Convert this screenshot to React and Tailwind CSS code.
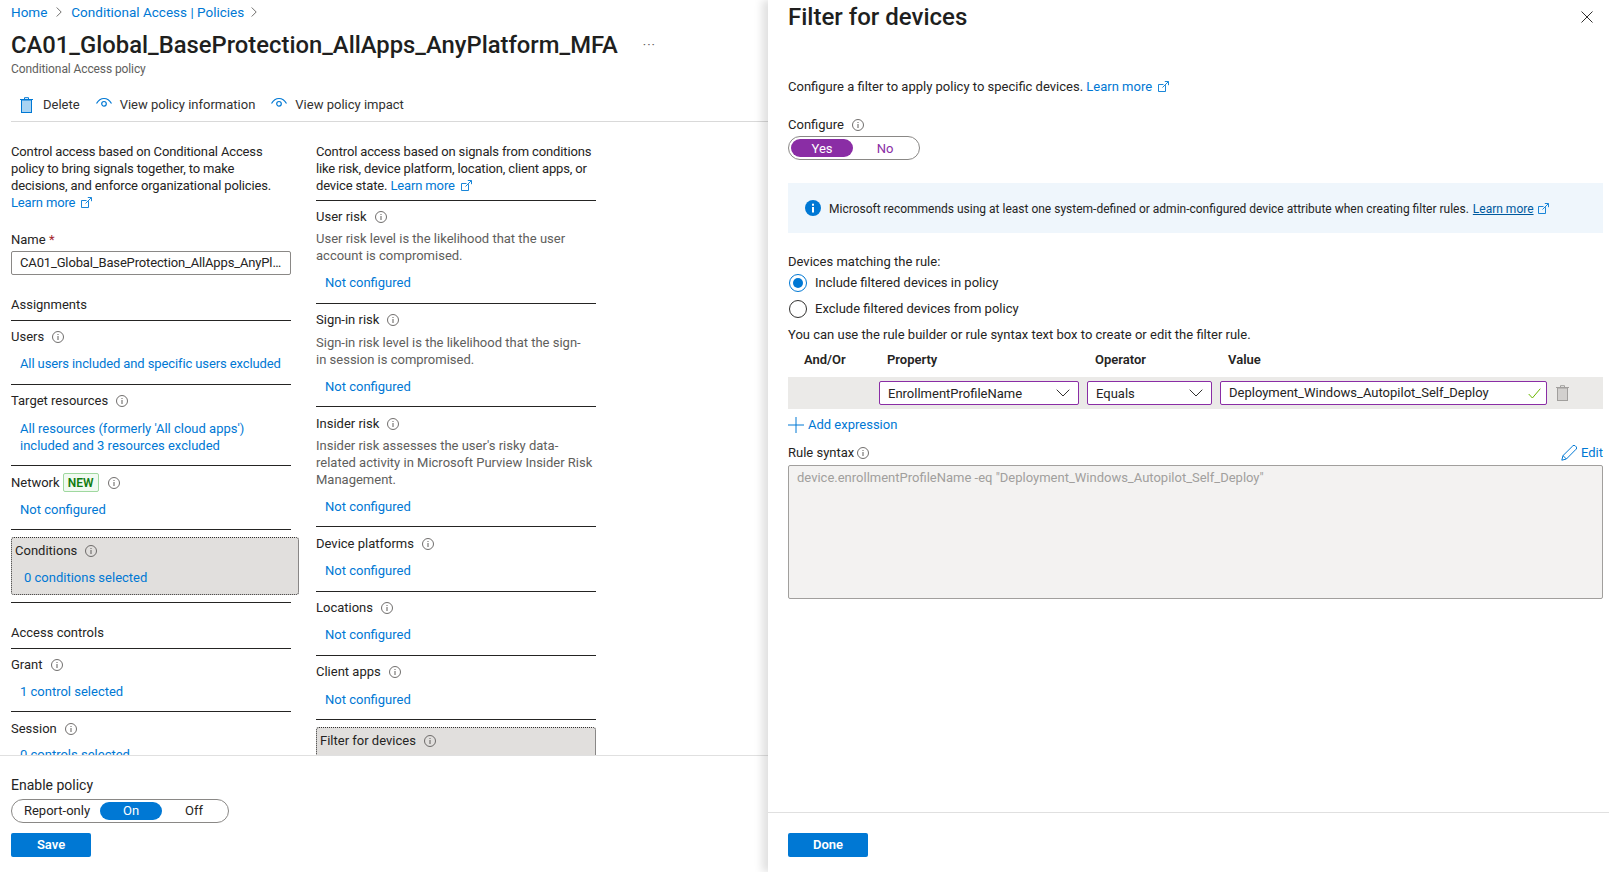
import React from "react";

const Info = ({ className = "ml-[8px]" }) => (
  <svg width="12" height="12" viewBox="0 0 12 12" className={`shrink-0 ${className}`} fill="none">
    <circle cx="6" cy="6" r="5.5" stroke="#605e5c" strokeWidth="0.9" />
    <rect x="5.5" y="5" width="1" height="4" fill="#605e5c" />
    <rect x="5.5" y="3" width="1" height="1" fill="#605e5c" />
  </svg>
);

const Ext = ({ className = "ml-[6px]", color = "#0078d4" }) => (
  <svg width="11" height="11" viewBox="0 0 11 11" className={`inline-block align-[-1px] ${className}`} fill="none" stroke={color} strokeWidth="0.9">
    <path d="M7.5 4.2V10.5H.5V3.5H5.5" />
    <path d="M4.5 6.5L10.2.8M6.800.5h3.700v3.700" />
  </svg>
);

const Eye = () => (
  <svg width="16" height="16" viewBox="0 0 16 16" fill="none" stroke="#0078d4" className="shrink-0">
    <path d="M.5 6.500C2.500 3 5 1.500 8 1.500s5.500 1.500 7.500 5" strokeWidth="1.2" />
    <circle cx="8" cy="6.800" r="2.300" strokeWidth="1.200" />
  </svg>
);

const Chevron = () => (
  <svg width="6" height="10" viewBox="0 0 6 10" fill="none" stroke="#605e5c" strokeWidth="0.9" className="shrink-0">
    <path d="M.7.5L5.2 5 .7 9.5" />
  </svg>
);

const Down = () => (
  <svg width="14" height="8" viewBox="0 0 14 8" fill="none" stroke="#323130" strokeWidth="1" className="shrink-0">
    <path d="M.7.7L7 7 13.3.7" />
  </svg>
);

const Trash = ({ stroke, fill }) => (
  <svg width="13" height="16" viewBox="0 0 13 16" className="shrink-0">
    <rect x="1.500" y="3" width="10" height="12.500" fill={fill} stroke={stroke} strokeWidth="1" />
    <path d="M0 2.500h13M4.500 2.500V.700h4v1.800" fill="none" stroke={stroke} strokeWidth="1" />
  </svg>
);

const Label = ({ children, mt, info = "ml-[8px]" }) => (
  <div className={`flex items-center h-[17px] leading-[17px] ${mt}`}>
    <span>{children}</span>
    <Info className={info} />
  </div>
);

const Lnk = ({ children, mt, pl = "pl-[9px]", extra = "" }) => (
  <div className={`text-[#0078d4] leading-[17px] whitespace-nowrap ${pl} ${mt} ${extra}`}>{children}</div>
);

const Line = ({ mt }) => <div className={`h-px bg-[#252423] ${mt}`} />;

const Desc = ({ children, mt }) => <div className={`text-[#605e5c] leading-[17px] whitespace-nowrap ${mt}`}>{children}</div>;

export default function App() {
  return (
    <div className="flex w-[1609px] h-[872px] overflow-hidden bg-white text-[#252423] text-[13px] font-['Roboto','Noto_Sans',sans-serif]">
      {/* Left blade */}
      <div className="flex flex-col w-[768px] h-full shrink-0">
        <div className="pl-[11px]">
          <div className="flex items-center h-[24px] text-[#0078d4] text-[13.5px]">
            <span>Home</span>
            <span className="mx-[9px] flex"><Chevron /></span>
            <span>Conditional Access | Policies</span>
            <span className="ml-[7px] flex"><Chevron /></span>
          </div>
          <div className="flex items-center h-[36px] mt-[3px]">
            <h1 className="text-[23.8px] font-medium text-[#201f1e] leading-[36px]">CA01_Global_BaseProtection_AllApps_AnyPlatform_MFA</h1>
            <span className="ml-[25px] text-[#605e5c] text-[13px] tracking-[1px] leading-[18px]">···</span>
          </div>
          <div className="h-[12px] leading-[12px] text-[12px] text-[#605e5c] tracking-[-0.1px]">Conditional Access policy</div>
          <div className="flex items-center h-[33px] mt-[14px] border-b border-[#d9d9d9] text-[#323130]">
            <span className="flex ml-[9px]"><Trash stroke="#0078d4" fill="#a9d3f2" /></span>
            <span className="ml-[10px]">Delete</span>
            <span className="flex ml-[16px]"><Eye /></span>
            <span className="ml-[8px]">View policy information</span>
            <span className="flex ml-[16px]"><Eye /></span>
            <span className="ml-[8px]">View policy impact</span>
          </div>
        </div>

        <div className="flex-1 min-h-0 overflow-hidden flex pl-[11px] pt-[21px]">
          {/* Column 1 */}
          <div className="w-[280px] shrink-0">
            <p className="leading-[17px] whitespace-nowrap tracking-[-0.14px]">
              Control access based on Conditional Access<br />
              policy to bring signals together, to make<br />
              decisions, and enforce organizational policies.<br />
              <span className="text-[#0078d4]">Learn more<Ext /></span>
            </p>
            <div className="mt-[20px] h-[17px] leading-[17px]">Name <span className="text-[#a4262c]">*</span></div>
            <div className="mt-[3px] h-[24px] border border-[#8a8886] rounded-[2px] flex items-center pl-[8px] pr-[4px]">
              <span className="truncate tracking-[-0.15px]">CA01_Global_BaseProtection_AllApps_AnyPlatform_MFA</span>
            </div>
            <div className="mt-[21px] leading-[17px]">Assignments</div>
            <Line mt="mt-[7px]" />
            <Label mt="mt-[7px]">Users</Label>
            <Lnk mt="mt-[10px]" extra="tracking-[-0.11px]">All users included and specific users excluded</Lnk>
            <Line mt="mt-[12px]" />
            <Label mt="mt-[7px]">Target resources</Label>
            <Lnk mt="mt-[11px]">All resources (formerly 'All cloud apps')<br />included and 3 resources excluded</Lnk>
            <Line mt="mt-[11px]" />
            <div className="flex items-center h-[17px] mt-[8px]">
              <span>Network</span>
              <span className="ml-[3px] flex items-center justify-center w-[36px] h-[19px] border border-[#9fd89f] bg-[#f1faf1] rounded-[2px] text-[#107c10] font-semibold text-[12px]">NEW</span>
              <Info className="ml-[9px]" />
            </div>
            <Lnk mt="mt-[10px]">Not configured</Lnk>
            <Line mt="mt-[11px]" />
            <div className="mt-[7px] w-[288px] h-[58px] bg-[#e1dfdd] border border-dotted border-[#323130] rounded-[3px] pl-[3px]">
              <Label mt="mt-[4px]">Conditions</Label>
              <Lnk mt="mt-[10px]">0 conditions selected</Lnk>
            </div>
            <Line mt="mt-[7px]" />
            <div className="mt-[21px] leading-[17px]">Access controls</div>
            <Line mt="mt-[7px]" />
            <Label mt="mt-[7px]">Grant</Label>
            <Lnk mt="mt-[10px]">1 control selected</Lnk>
            <Line mt="mt-[11px]" />
            <Label mt="mt-[8px]">Session</Label>
            <Lnk mt="mt-[9px]">0 controls selected</Lnk>
          </div>

          {/* Column 2 */}
          <div className="w-[280px] shrink-0 ml-[25px]">
            <p className="leading-[17px] whitespace-nowrap tracking-[-0.14px]">
              Control access based on signals from conditions<br />
              like risk, device platform, location, client apps, or<br />
              device state. <span className="text-[#0078d4]">Learn more<Ext /></span>
            </p>
            <Line mt="mt-[6px]" />
            <Label mt="mt-[7px]">User risk</Label>
            <Desc mt="mt-[5px]">User risk level is the likelihood that the user<br />account is compromised.</Desc>
            <Lnk mt="mt-[10px]">Not configured</Lnk>
            <Line mt="mt-[12px]" />
            <Label mt="mt-[7px]">Sign-in risk</Label>
            <Desc mt="mt-[6px]">Sign-in risk level is the likelihood that the sign-<br />in session is compromised.</Desc>
            <Lnk mt="mt-[10px]">Not configured</Lnk>
            <Line mt="mt-[11px]" />
            <Label mt="mt-[8px]">Insider risk</Label>
            <Desc mt="mt-[5px]">Insider risk assesses the user's risky data-<br />related activity in Microsoft Purview Insider Risk<br />Management.</Desc>
            <Lnk mt="mt-[10px]">Not configured</Lnk>
            <Line mt="mt-[11px]" />
            <Label mt="mt-[8px]">Device platforms</Label>
            <Lnk mt="mt-[10px]">Not configured</Lnk>
            <Line mt="mt-[12px]" />
            <Label mt="mt-[7px]">Locations</Label>
            <Lnk mt="mt-[10px]">Not configured</Lnk>
            <Line mt="mt-[12px]" />
            <Label mt="mt-[7px]">Client apps</Label>
            <Lnk mt="mt-[11px]">Not configured</Lnk>
            <Line mt="mt-[11px]" />
            <div className="mt-[7px] h-[60px] bg-[#e1dfdd] border border-dotted border-[#323130] rounded-[3px] pl-[3px]">
              <Label mt="mt-[4px]">Filter for devices</Label>
            </div>
          </div>
        </div>

        <div className="h-[117px] shrink-0 border-t border-[#e0e0e0] pl-[11px] pt-[21px]">
          <div className="leading-[17px] text-[14px]">Enable policy</div>
          <div className="mt-[5px] w-[218px] h-[24px] border border-[#8a8886] rounded-full p-[2px] flex items-center">
            <span className="w-[86px] text-center">Report-only</span>
            <span className="w-[62px] h-[18px] rounded-full bg-[#0078d4] text-white flex items-center justify-center">On</span>
            <span className="flex-1 text-center">Off</span>
          </div>
          <div className="mt-[10px] w-[80px] h-[24px] bg-[#0078d4] rounded-[2px] text-white font-semibold flex items-center justify-center">Save</div>
        </div>
      </div>

      {/* Right panel */}
      <div className="relative z-10 flex flex-col flex-1 h-full shadow-[-6px_0_8px_rgba(0,0,0,0.12)] bg-white">
        <div className="flex-1 min-h-0 pl-[20px] pr-[6px]">
          <div className="flex items-center justify-between h-[34px] pr-[10px]">
            <h2 className="text-[24px] font-medium text-[#201f1e] leading-[34px]">Filter for devices</h2>
            <svg width="12" height="12" viewBox="0 0 12 12" stroke="#323130" strokeWidth="1" fill="none"><path d="M.5.5l11 11M11.5.5l-11 11" /></svg>
          </div>
          <div className="mt-[44px] leading-[17px]">
            Configure a filter to apply policy to specific devices. <span className="text-[#0078d4]">Learn more<Ext /></span>
          </div>
          <Label mt="mt-[21px]">Configure</Label>
          <div className="mt-[3px] w-[132px] h-[24px] border border-[#8a8886] rounded-full p-[2px] flex items-center">
            <span className="w-[62px] h-[18px] pt-px rounded-full bg-[#8a2da5] text-white flex items-center justify-center">Yes</span>
            <span className="flex-1 text-center text-[#8a2da5] pt-px">No</span>
          </div>
          <div className="mt-[23px] h-[50px] bg-[#eff6fc] flex items-center pl-[17px] text-[12px]">
            <svg width="16" height="16" viewBox="0 0 16 16" className="shrink-0">
              <circle cx="8" cy="8" r="8" fill="#0078d4" />
              <rect x="7" y="7" width="2" height="5.500" fill="#fff" />
              <rect x="7" y="3.700" width="2" height="2" fill="#fff" />
            </svg>
            <span className="ml-[8px] pt-px">Microsoft recommends using at least one system-defined or admin-configured device attribute when creating filter rules.</span>
            <span className="ml-[4px] pt-px text-[#005a9e] underline">Learn more</span>
            <Ext className="ml-[4px]" />
          </div>
          <div className="mt-[20px] leading-[17px]">Devices matching the rule:</div>
          <div className="mt-[4px] h-[18px] flex items-center pl-px">
            <span className="w-[18px] h-[18px] rounded-full border border-[#0078d4] flex items-center justify-center shrink-0">
              <span className="w-[10px] h-[10px] rounded-full bg-[#0078d4]" />
            </span>
            <span className="ml-[8px]">Include filtered devices in policy</span>
          </div>
          <div className="mt-[8px] h-[18px] flex items-center pl-px">
            <span className="w-[18px] h-[18px] rounded-full border border-[#323130] shrink-0" />
            <span className="ml-[8px]">Exclude filtered devices from policy</span>
          </div>
          <div className="mt-[8px] leading-[17px]">You can use the rule builder or rule syntax text box to create or edit the filter rule.</div>
          <div className="mt-[8px] flex h-[17px] items-center font-semibold pl-[16px]">
            <span className="w-[83px]">And/Or</span>
            <span className="w-[208px]">Property</span>
            <span className="w-[133px]">Operator</span>
            <span>Value</span>
          </div>
          <div className="mt-[9px] h-[32px] bg-[#ebeae8] flex items-center pl-[91px]">
            <div className="w-[200px] h-[24px] bg-white border border-[#8a2da5] rounded-[2px] flex items-center justify-between pl-[8px] pr-[8px]">
              <span className="pt-[2px]">EnrollmentProfileName</span><Down />
            </div>
            <div className="ml-[8px] w-[125px] h-[24px] bg-white border border-[#8a2da5] rounded-[2px] flex items-center justify-between pl-[8px] pr-[8px]">
              <span className="pt-[2px]">Equals</span><Down />
            </div>
            <div className="ml-[8px] w-[327px] h-[24px] bg-white border border-[#8a2da5] rounded-[2px] flex items-center justify-between pl-[8px] pr-[5px]">
              <span>Deployment_Windows_Autopilot_Self_Deploy</span>
              <svg width="13" height="11" viewBox="0 0 13 11" fill="none" stroke="#6bb700" strokeWidth="1"><path d="M.7 6l3.700 4L12.300.7" /></svg>
            </div>
            <span className="flex ml-[9px]"><Trash stroke="#a19f9d" fill="#d2d0ce" /></span>
          </div>
          <div className="mt-[7px] h-[17px] flex items-center text-[#0078d4]">
            <svg width="16" height="16" viewBox="0 0 16 16" stroke="#0078d4" strokeWidth="1" fill="none" className="shrink-0"><path d="M8 0v16M0 8h16" /></svg>
            <span className="ml-[4px]">Add expression</span>
          </div>
          <div className="mt-[11px] h-[17px] flex items-center justify-between">
            <div className="flex items-center">
              <span>Rule syntax</span>
              <Info className="ml-[3px]" />
            </div>
            <div className="flex items-center text-[#0078d4]">
              <svg width="16" height="16" viewBox="0 0 16 16" fill="none" stroke="#0078d4" strokeWidth="1">
                <path d="M.8 15.200l1.200-4.600L11.800.9a1.700 1.700 0 0 1 2.500 0l.8.8a1.700 1.700 0 0 1 0 2.500L5.400 14z" />
                <path d="M2 10.600l3.400 3.400" />
              </svg>
              <span className="ml-[4px]">Edit</span>
            </div>
          </div>
          <div className="mt-[4px] h-[134px] bg-[#f3f2f1] border border-[#a19f9d] rounded-[2px] pl-[8px] pt-[3px] leading-[17px] text-[#a19f9d]">
            device.enrollmentProfileName -eq "Deployment_Windows_Autopilot_Self_Deploy"
          </div>
        </div>
        <div className="h-[60px] shrink-0 border-t border-[#e0e0e0] pl-[20px] pt-[20px]">
          <div className="w-[80px] h-[24px] bg-[#0078d4] rounded-[2px] text-white font-semibold flex items-center justify-center">Done</div>
        </div>
      </div>
    </div>
  );
}
